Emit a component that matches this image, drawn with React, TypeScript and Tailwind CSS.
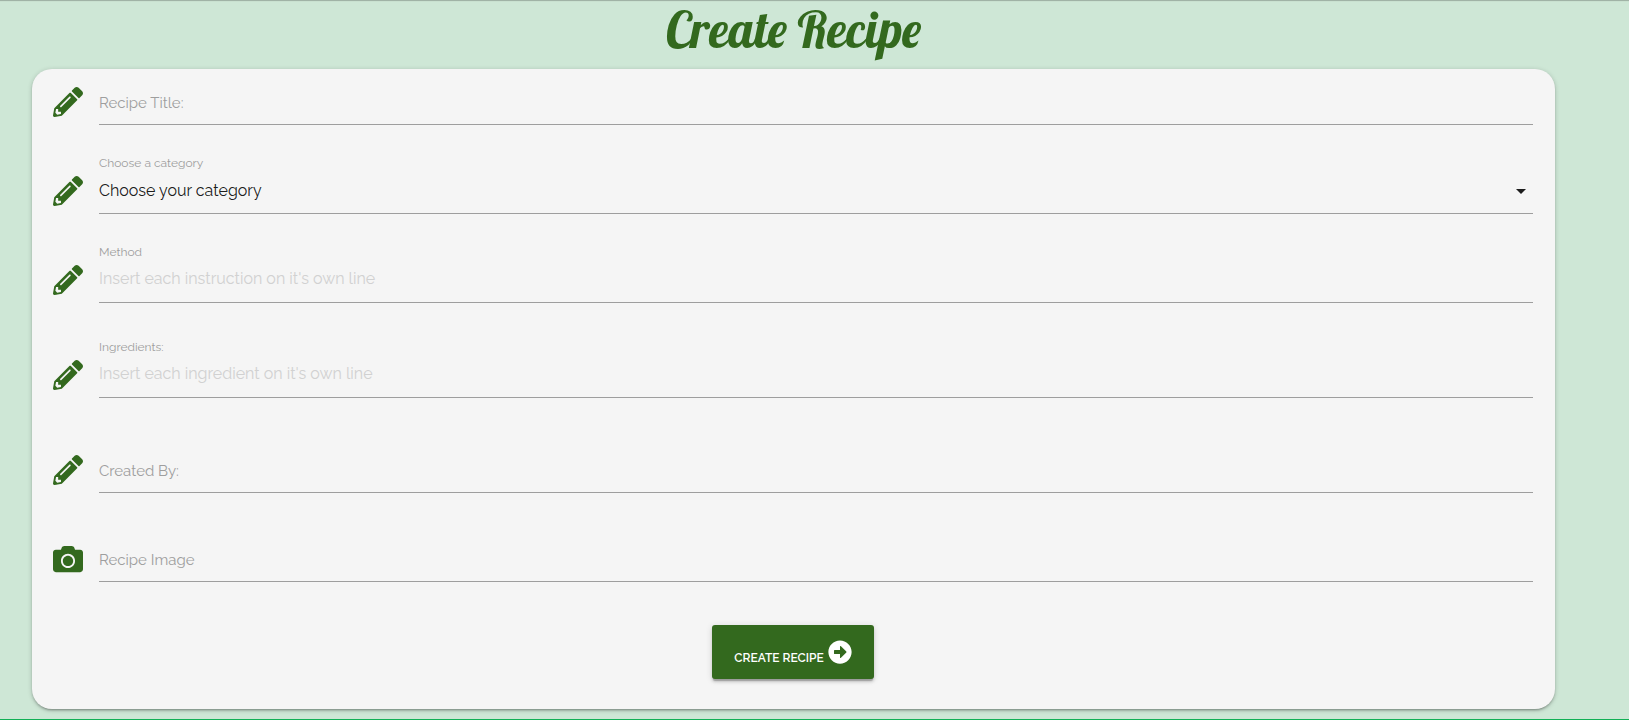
import type { ReactNode } from "react";
import { FaArrowAltCircleRight, FaCamera, FaPencilAlt } from "react-icons/fa";

const control =
  "block h-[45px] w-full resize-none appearance-none overflow-hidden rounded-none border-b border-[#9e9e9e] bg-transparent text-base text-black/90 outline-none placeholder:text-[#d1d1d1] focus:border-[#33691e]";

type FieldProps = {
  id: string;
  label: string;
  raised?: boolean;
  icon?: ReactNode;
  children: ReactNode;
};

function Field({ id, label, raised, icon, children }: FieldProps) {
  return (
    <div className="flex items-center gap-4">
      <span className="shrink-0 pb-px text-[30px] text-[#33691e]">{icon ?? <FaPencilAlt />}</span>
      <div className="relative min-w-0 flex-1">
        <label
          htmlFor={id}
          className={
            raised
              ? "absolute left-0 -top-[14px] text-xs leading-4 text-[#9e9e9e]"
              : "pointer-events-none absolute left-0 top-[13px] text-[15px] leading-5 text-[#9e9e9e]"
          }
        >
          {label}
        </label>
        {children}
      </div>
    </div>
  );
}

export default function App() {
  return (
    <div className="border-b border-[#12b056] bg-[#cee7d6] font-['Raleway','Lato',sans-serif] shadow-[inset_0_2px_1px_-1px_rgba(0,0,0,0.25)]">
      <main className="pb-[10px] pl-8 pr-[74px]">
        <h1 className="pb-[9px] text-center font-['Lobster','Liberation_Serif',serif] text-[50px] font-normal leading-[60px] text-[#33691e]">
          Create Recipe
        </h1>
        <form
          className="rounded-[20px] bg-[#f5f5f5] pb-[30px] pl-[21px] pr-[22px] pt-[11px] shadow-[0_2px_2px_0_rgba(0,0,0,0.14),0_3px_1px_-2px_rgba(0,0,0,0.12),0_1px_5px_0_rgba(0,0,0,0.2)]"
          onSubmit={(event) => event.preventDefault()}
        >
          <div className="flex flex-col gap-[50px]">
            <div className="flex flex-col gap-11">
              <Field id="title" label="Recipe Title:">
                <input id="title" type="text" className={control} />
              </Field>
              <Field id="category" label="Choose a category" raised>
                <select id="category" className={control}>
                  <option>Choose your category</option>
                </select>
                <svg
                  viewBox="0 0 10 5"
                  className="pointer-events-none absolute right-[7px] top-5 h-[5px] w-[10px]"
                  aria-hidden="true"
                >
                  <path d="M0 0h10L5 5z" fill="#1c1c1c" />
                </svg>
              </Field>
              <Field id="method" label="Method" raised>
                <textarea
                  id="method"
                  rows={1}
                  placeholder="Insert each instruction on it's own line"
                  className={`${control} py-[9px]`}
                />
              </Field>
            </div>
            <Field id="ingredients" label="Ingredients:" raised>
              <textarea
                id="ingredients"
                rows={1}
                placeholder="Insert each ingredient on it's own line"
                className={`${control} py-[9px]`}
              />
            </Field>
            <div className="flex flex-col gap-11">
              <Field id="author" label="Created By:">
                <input id="author" type="text" className={control} />
              </Field>
              <Field id="image" label="Recipe Image" icon={<FaCamera />}>
                <input id="image" type="text" className={control} />
              </Field>
            </div>
          </div>
          <div className="mt-[43px] flex justify-center">
            <button
              type="submit"
              className="flex h-[54px] items-center gap-1 rounded-[3px] bg-[#33691e] px-[22px] text-xs font-semibold uppercase text-white shadow-[0_3px_3px_0_rgba(0,0,0,0.14),0_1px_7px_0_rgba(0,0,0,0.12),0_3px_1px_-1px_rgba(0,0,0,0.2)]"
            >
              <span className="pt-3">Create Recipe</span>
              <FaArrowAltCircleRight className="text-2xl" />
            </button>
          </div>
        </form>
      </main>
    </div>
  );
}
